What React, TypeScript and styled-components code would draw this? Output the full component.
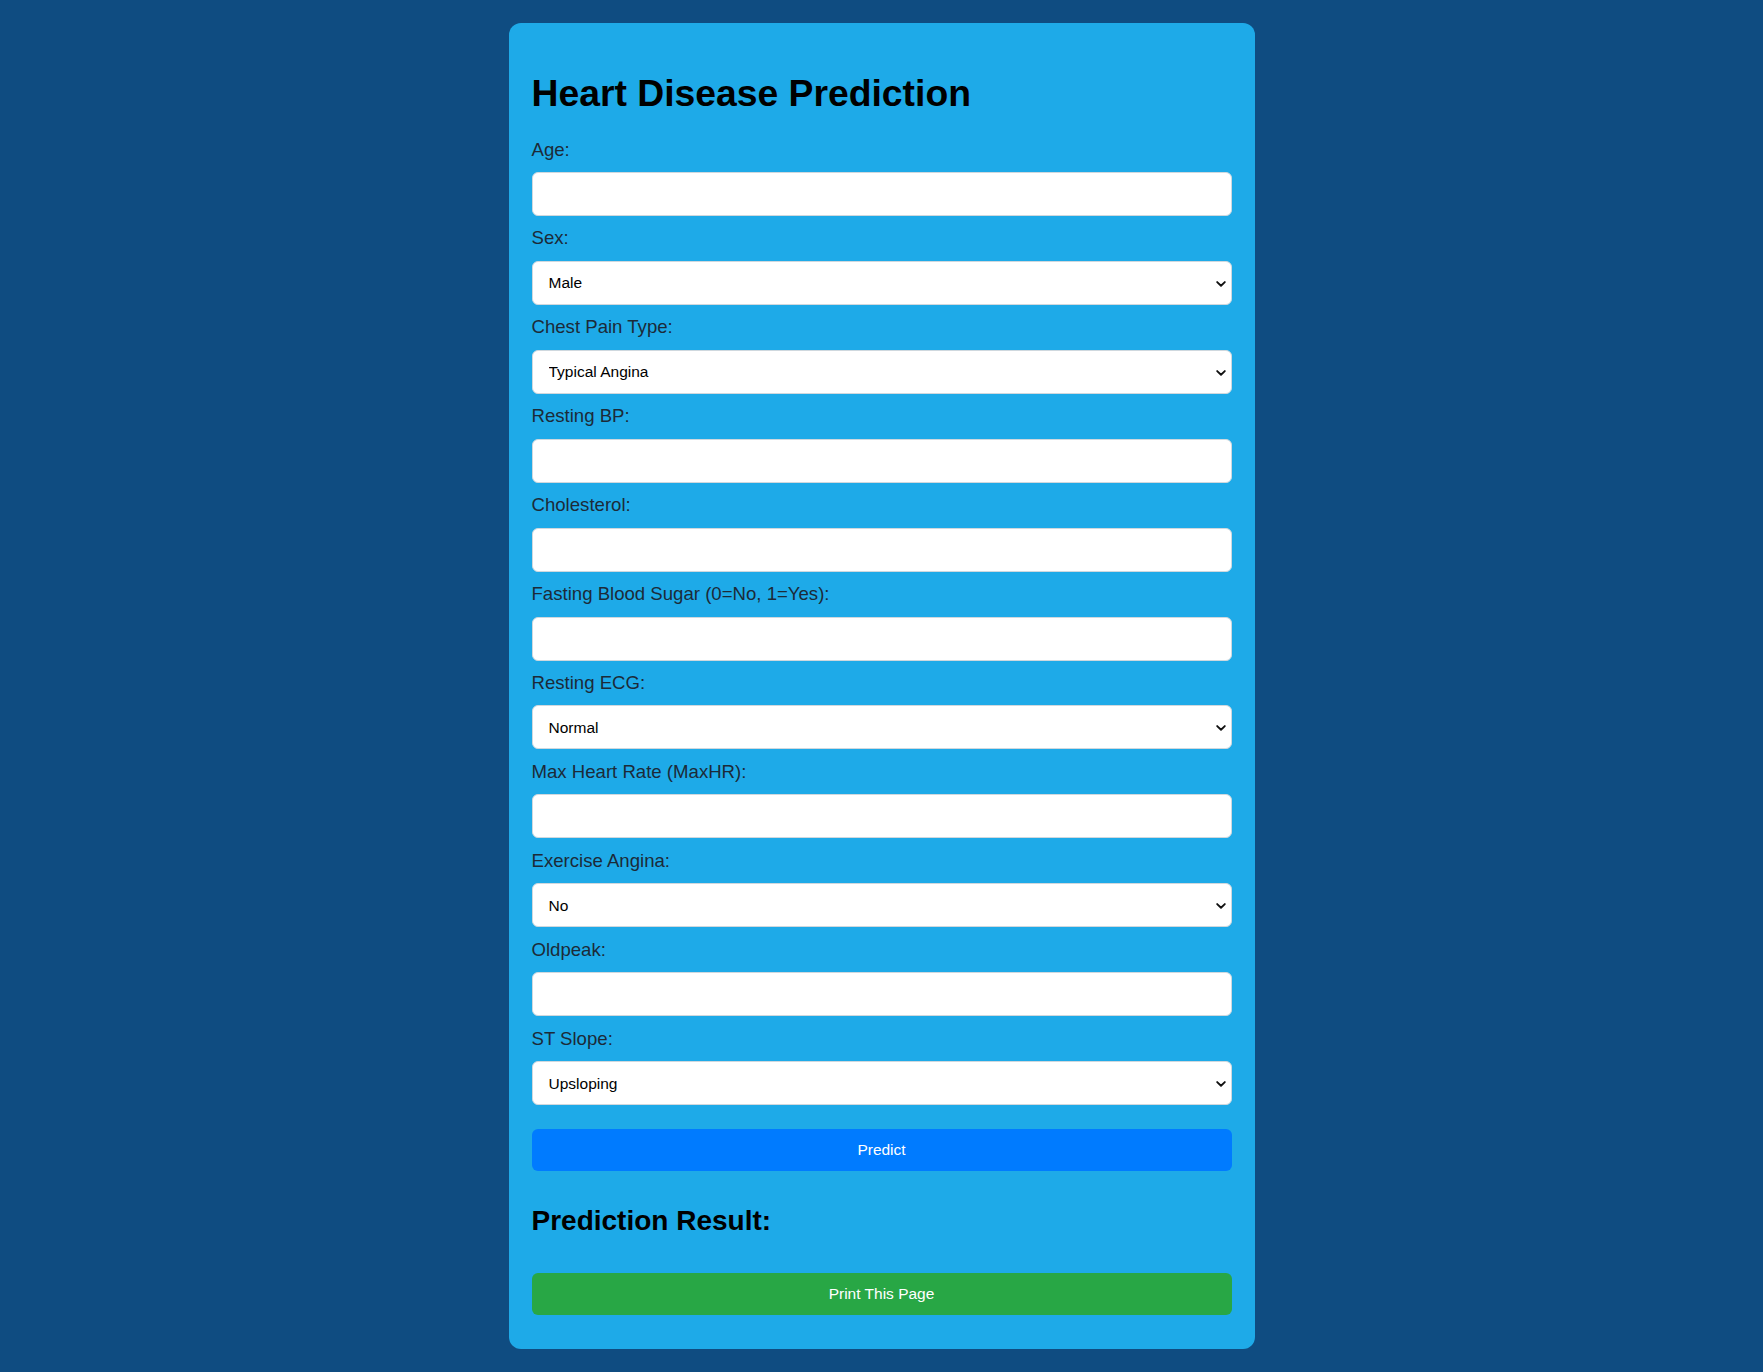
import React from "react";
import styled, { createGlobalStyle } from "styled-components";

const GlobalStyle = createGlobalStyle`
  html, body {
    margin: 0;
    padding: 0;
    background: #0f4c81;
    font-family: "Liberation Sans", Arial, sans-serif;
  }
  * { box-sizing: border-box; }
`;

const Page = styled.div`
  padding: 23px 0;
  display: flex;
  justify-content: center;
`;

const Card = styled.div`
  width: 746px;
  background: #1eaae8;
  border-radius: 12px;
  padding: 23px 23px 34px;
  display: flex;
  flex-direction: column;
`;

const Title = styled.h1`
  margin: 25.6px 0 24px;
  font-size: 37.3px;
  line-height: 43px;
  font-weight: 700;
  color: #000;
`;

const Form = styled.form`
  display: flex;
  flex-direction: column;
  margin: 0;
`;

const Field = styled.div`
  display: flex;
  flex-direction: column;
  margin-bottom: 11.4px;
`;

const Label = styled.label`
  font-size: 18.6px;
  line-height: 21.4px;
  color: #1c2a38;
  margin-bottom: 12.1px;
`;

const controlBase = `
  width: 100%;
  height: 44px;
  border: 1px solid #cfd8de;
  border-radius: 6px;
  background: #fff;
  font-family: "Liberation Sans", Arial, sans-serif;
  font-size: 15.5px;
  color: #000;
  margin: 0;
`;

const TextInput = styled.input`
  ${controlBase}
  padding: 0 14px;
`;

const SelectWrap = styled.div`
  position: relative;
  width: 100%;
`;

const Select = styled.select`
  ${controlBase}
  display: block;
  appearance: none;
  -webkit-appearance: none;
  padding: 0 28px 0 16px;
`;

const Chevron = styled.svg`
  position: absolute;
  right: 6px;
  top: 50%;
  width: 10px;
  height: 6px;
  margin-top: -2px;
  pointer-events: none;
`;

const Button = styled.button<{ $tone: "blue" | "green" }>`
  width: 100%;
  height: 42px;
  border: none;
  border-radius: 6px;
  background: ${(p) => (p.$tone === "blue" ? "#007bff" : "#28a745")};
  color: #fff;
  font-family: "Liberation Sans", Arial, sans-serif;
  font-size: 15.5px;
  cursor: pointer;
`;

const PredictButton = styled(Button)`
  margin-top: 12.3px;
`;

const ResultTitle = styled.h2`
  margin: 34.2px 0 35.6px;
  font-size: 28px;
  line-height: 32.2px;
  font-weight: 700;
  color: #000;
`;

type FieldDef =
  | { label: string; kind: "input" }
  | { label: string; kind: "select"; options: string[] };

const fields: FieldDef[] = [
  { label: "Age:", kind: "input" },
  { label: "Sex:", kind: "select", options: ["Male", "Female"] },
  {
    label: "Chest Pain Type:",
    kind: "select",
    options: ["Typical Angina", "Atypical Angina", "Non-Anginal Pain", "Asymptomatic"],
  },
  { label: "Resting BP:", kind: "input" },
  { label: "Cholesterol:", kind: "input" },
  { label: "Fasting Blood Sugar (0=No, 1=Yes):", kind: "input" },
  { label: "Resting ECG:", kind: "select", options: ["Normal", "ST", "LVH"] },
  { label: "Max Heart Rate (MaxHR):", kind: "input" },
  { label: "Exercise Angina:", kind: "select", options: ["No", "Yes"] },
  { label: "Oldpeak:", kind: "input" },
  { label: "ST Slope:", kind: "select", options: ["Upsloping", "Flat", "Downsloping"] },
];

export default function App() {
  return (
    <>
      <GlobalStyle />
      <Page>
        <Card>
          <Title>Heart Disease Prediction</Title>
          <Form onSubmit={(e) => e.preventDefault()}>
            {fields.map((f, i) => (
              <Field key={i}>
                <Label htmlFor={`f${i}`}>{f.label}</Label>
                {f.kind === "input" ? (
                  <TextInput id={`f${i}`} type="text" />
                ) : (
                  <SelectWrap>
                    <Select id={`f${i}`} defaultValue={f.options[0]}>
                      {f.options.map((o) => (
                        <option key={o}>{o}</option>
                      ))}
                    </Select>
                    <Chevron viewBox="0 0 10 6" aria-hidden="true">
                      <path
                        d="M1.2 1.1 L5 4.7 L8.8 1.1"
                        fill="none"
                        stroke="#111"
                        strokeWidth="1.9"
                        strokeLinecap="round"
                        strokeLinejoin="round"
                      />
                    </Chevron>
                  </SelectWrap>
                )}
              </Field>
            ))}
            <PredictButton type="submit" $tone="blue">
              Predict
            </PredictButton>
          </Form>
          <ResultTitle>Prediction Result:</ResultTitle>
          <Button type="button" $tone="green">
            Print This Page
          </Button>
        </Card>
      </Page>
    </>
  );
}
